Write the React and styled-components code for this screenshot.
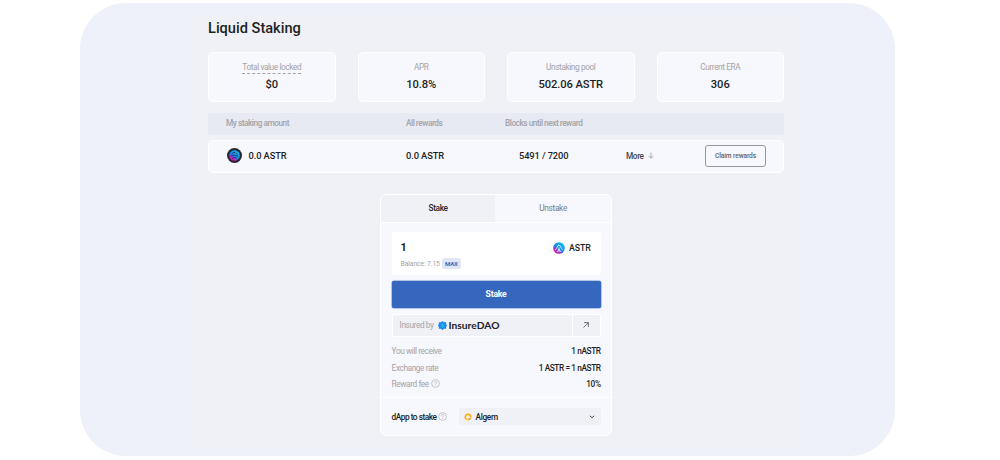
import React from "react";
import styled, { createGlobalStyle } from "styled-components";

const GlobalStyle = createGlobalStyle`
  * { box-sizing: border-box; }
  body { margin: 0; background: #fff; font-family: Roboto, "Liberation Sans", sans-serif; color: #1d1f24; }
  button { font-family: inherit; letter-spacing: inherit; margin: 0; padding: 0; border: 0; background: none; color: inherit; }
`;

const Shell = styled.div`
  width: 815px;
  height: 453px;
  margin: 3px 0 4px 80px;
  padding: 13px 95px 10px 115px;
  border-radius: 46px;
  background: #eef1fa;
  overflow: hidden;
`;

const Page = styled.main`
  height: 430px;
  padding: 0 16px 0 13px;
  background: #f0f1f6;
  box-shadow: 0 0 4px #f0f1f6;
`;

const Title = styled.h1`
  margin: 0;
  height: 36px;
  line-height: 25px;
  font-size: 14.6px;
  font-weight: 500;
  letter-spacing: 0;
`;

const Stats = styled.section`
  display: grid;
  grid-template-columns: repeat(4, 1fr);
  column-gap: 22px;
`;

const StatCard = styled.div`
  height: 50px;
  display: flex;
  flex-direction: column;
  align-items: center;
  padding-top: 8px;
  border: 1px solid #fff;
  border-radius: 5px;
  background: #f7f8fd;
`;

const StatLabel = styled.span`
  height: 13px;
  line-height: 12px;
  font-size: 8.3px;
  letter-spacing: -0.42px;
  color: #a3a3a8;
  border-bottom: 1px dashed ${(p) => (p.$hint ? "#a3a3a8" : "transparent")};
`;

const StatValue = styled.span`
  margin-top: 4px;
  line-height: 14px;
  font-size: 11.2px;
  font-weight: 500;
  letter-spacing: -0.1px;
`;

const columns = "180px 99px 121px 79px 1fr";

const TableHead = styled.div`
  display: grid;
  grid-template-columns: ${columns};
  height: 22px;
  margin-top: 11px;
  padding: 0 18px;
  line-height: 20px;
  font-size: 8.3px;
  font-weight: 500;
  letter-spacing: -0.48px;
  color: #a3a3a8;
  border-radius: 2px;
  background: #e7eaf3;
`;

const TableRow = styled.div`
  display: grid;
  grid-template-columns: ${columns};
  align-items: center;
  height: 33px;
  margin-top: 5px;
  padding: 0 17px 2px;
  border: 1px solid #fff;
  border-radius: 5px;
  background: #f7f8fd;
`;

const Cell = styled.span`
  display: flex;
  align-items: center;
  gap: ${(p) => p.$gap || 0}px;
  padding-left: ${(p) => p.$indent || 0}px;
  font-size: ${(p) => p.$size || 9.3}px;
  font-weight: 500;
  line-height: 12px;
  letter-spacing: -0.1px;
`;

const MoreButton = styled.button`
  display: flex;
  align-items: center;
  gap: 4px;
  font-size: 8.3px;
  font-weight: 500;
  letter-spacing: -0.4px;
  color: #44474f;
`;

const ClaimButton = styled.button`
  width: 61px;
  height: 22px;
  justify-self: end;
  border: 1px solid #96979e;
  border-radius: 3px;
  font-size: 6.6px;
  font-weight: 500;
  letter-spacing: -0.1px;
  color: #60636c;
`;

const StakeCard = styled.section`
  width: 232px;
  height: 242px;
  margin: 21px 0 0 171.6px;
  border: 1px solid #fff;
  border-radius: 6px;
  background: #f7f8fd;
  overflow: hidden;
`;

const Tabs = styled.div`
  display: flex;
  height: 28px;
  border-bottom: 1px solid #fff;
`;

const Tab = styled.button`
  flex: ${(p) => (p.$active ? "0 0 114px" : 1)};
  padding: 0 0 1px 1px;
  font-size: 8.3px;
  font-weight: ${(p) => (p.$active ? 500 : 400)};
  letter-spacing: ${(p) => (p.$active ? "-0.4px" : "-0.3px")};
  color: ${(p) => (p.$active ? "#26282d" : "#767b8a")};
  background: ${(p) => (p.$active ? "#f0f1f6" : "#f7f8fd")};
`;

const StakeBody = styled.div`
  height: 175px;
  padding: 9px 10px 0 11px;
  border-bottom: 1px solid #fff;
`;

const AmountBox = styled.div`
  height: 43px;
  padding: 9px 10px 0 9px;
  border-radius: 3px;
  background: #fff;
`;

const AmountLine = styled.div`
  display: flex;
  align-items: center;
  justify-content: space-between;
  height: 13px;
  font-size: 10.8px;
  font-weight: 700;
`;

const BalanceLine = styled.div`
  display: flex;
  align-items: center;
  gap: 2px;
  height: 11px;
  margin-top: 4px;
  font-size: 6.8px;
  letter-spacing: -0.12px;
  color: #a3a3a8;
`;

const MaxButton = styled.button`
  width: 19px;
  height: 11px;
  border-radius: 3px;
  font-size: 6.2px;
  font-weight: 700;
  letter-spacing: -0.3px;
  color: #4768b4;
  background: #dfe6f6;
`;

const SubmitButton = styled.button`
  display: block;
  width: 100%;
  height: 27px;
  margin-top: 6px;
  padding-bottom: 1px;
  border-radius: 2px;
  font-size: 8.6px;
  font-weight: 700;
  letter-spacing: -0.2px;
  color: #fff;
  background: #3567bf;
  box-shadow: 0 0 0 0.5px #6f93d3;
`;

const Insurance = styled.div`
  display: flex;
  height: 23px;
  margin-top: 6px;
  border: 1px solid #fff;
  border-radius: 2px;
  background: #f0f1f6;
`;

const InsuranceInfo = styled.div`
  flex: 1;
  display: flex;
  align-items: center;
  padding: 0 0 1px 7px;
  font-size: 8.3px;
  letter-spacing: -0.42px;
  color: #a3a3a8;
  svg { margin: 0 2px 0 4px; }
`;

const InsuranceBrand = styled.span`
  font-family: Lato, sans-serif;
  font-size: 10.2px;
  font-weight: 700;
  letter-spacing: 0.05px;
  color: #202127;
`;

const InsuranceLink = styled.div`
  display: grid;
  place-items: center;
  width: 28px;
  padding: 0 0 1px 0;
  border-left: 1px solid #fff;
`;

const Details = styled.dl`
  margin: 6px 0 0;
`;

const Detail = styled.div`
  display: flex;
  align-items: center;
  justify-content: space-between;
  height: 16.4px;
  font-size: 8.3px;
  letter-spacing: -0.42px;
  dt { display: flex; align-items: center; gap: 2px; color: #a3a3a8; }
  dd { margin: 0; font-weight: 500; }
`;

const DappLine = styled.div`
  display: flex;
  align-items: center;
  gap: 2px;
  height: 37px;
  padding: 0 10px 0 11px;
  font-size: 8.3px;
  font-weight: 500;
  letter-spacing: -0.48px;
`;

const DappSelect = styled.div`
  display: flex;
  align-items: center;
  gap: 4px;
  width: 142px;
  height: 17px;
  margin-left: auto;
  padding: 0 6px 0 5px;
  border-radius: 2px;
  background: #f0f1f6;
  letter-spacing: -0.35px;
  svg:last-child { margin-left: auto; }
`;

const AstarIcon = ({ size, dark, id }) => (
  <svg width={size} height={size} viewBox="0 0 16 16" fill="none">
    <defs>
      <linearGradient id={id} x1="3" y1="14" x2="12" y2="2" gradientUnits="userSpaceOnUse">
        <stop stopColor="#e6109a" />
        <stop offset=".25" stopColor="#9a38d0" />
        <stop offset=".45" stopColor="#1689e8" />
        <stop offset="1" stopColor="#12b9f4" />
      </linearGradient>
    </defs>
    {dark && <circle cx="8" cy="8" r="8" fill="#28262f" />}
    <g transform={dark ? "translate(2.2 2.2) scale(.725)" : undefined}>
      <circle cx="8" cy="8" r="7.8" fill={`url(#${id})`} />
      <path
        d={
          dark
            ? "M3 8.500c2 1 3-1 5-1s2.500 2 5 1M5 12c1.500-1.500 4.500-1.500 6 0M4.500 5c1-1.300 2-1.800 3.500-1.500M10.500 4.200l1.500 1.500"
            : "M3.500 10c2.500-.5 1.500-5.500 4.500-5.700 3-.2 2 5.200 4.500 5.700M8 7.800v5M5.800 12.600 8 9.500l2.200 3.100"
        }
        stroke={dark ? "#251f50" : "#d9edff"}
        strokeWidth="1.300"
        strokeLinecap="round"
      />
    </g>
  </svg>
);

const ArrowDown = () => (
  <svg width="6" height="7" viewBox="0 0 6 7" fill="none" stroke="#9699a1" strokeWidth=".8">
    <path d="M3 .5v5.700M.6 3.900 3 6.300l2.400-2.400" />
  </svg>
);

const ArrowOut = () => (
  <svg width="6" height="6" viewBox="0 0 6 6" fill="none" stroke="#62656d" strokeWidth=".9">
    <path d="M.5 5.500 5.300.7M1 .6h4.400V5" />
  </svg>
);

const InsureIcon = () => (
  <svg width="9" height="9" viewBox="0 0 18 18">
    <path
      d="M9 0l3.100 2.700 4.100-.2.2 4.200L18 9l-1.600 2.400-.2 4.100-4.100-.2L9 18l-3.100-2.700-4.100.2-.2-4.100L0 9l1.600-2.300.2-4.200 4.100.2z"
      fill="#1787f2"
    />
    <path d="M9 4v10M4.800 6.600l8.400 4.800M4.800 11.400l8.400-4.800" stroke="#28b4ee" strokeWidth="2" />
  </svg>
);

const HelpIcon = () => (
  <svg width="9" height="9" viewBox="0 0 18 18" fill="none" stroke="#a9aab0" strokeWidth="1.300">
    <circle cx="9" cy="9" r="7.800" />
    <path d="M6.600 7.200c0-3.200 4.900-3 4.900 0 0 1.700-2.500 1.800-2.500 3.600M9 12.200v1.500" />
  </svg>
);

const AlgemIcon = () => (
  <svg width="8" height="8" viewBox="0 0 16 16" fill="none">
    <path d="M13.400 8.500A5.400 5.400 0 1 0 6 13" stroke="#ffb01f" strokeWidth="3.600" />
    <path d="M6 15c4 .4 8-1.500 9-5.500h-4L8.500 12z" fill="#f6a11b" />
  </svg>
);

const Chevron = () => (
  <svg width="6" height="4" viewBox="0 0 6 4" fill="none" stroke="#303239" strokeWidth="1">
    <path d="M1 .8 3 2.800 5 .8" />
  </svg>
);

const stats = [
  { label: "Total value locked", value: "$0", hint: true },
  { label: "APR", value: "10.8%" },
  { label: "Unstaking pool", value: "502.06 ASTR" },
  { label: "Current ERA", value: "306" },
];

const details = [
  { label: "You will receive", value: "1 nASTR" },
  { label: "Exchange rate", value: "1 ASTR = 1 nASTR" },
  { label: "Reward fee", value: "10%", help: true },
];

export default function App() {
  return (
    <>
      <GlobalStyle />
      <Shell>
        <Page>
          <Title>Liquid Staking</Title>
          <Stats>
            {stats.map((s) => (
              <StatCard key={s.label}>
                <StatLabel $hint={s.hint}>{s.label}</StatLabel>
                <StatValue>{s.value}</StatValue>
              </StatCard>
            ))}
          </Stats>
          <TableHead>
            <span>My staking amount</span>
            <span>All rewards</span>
            <span>Blocks until next reward</span>
          </TableHead>
          <TableRow>
            <Cell $gap={7} $indent={0.5}>
              <AstarIcon size={15} dark id="astar-row" />
              0.0 ASTR
            </Cell>
            <Cell>0.0 ASTR</Cell>
            <Cell $indent={14}>5491 / 7200</Cell>
            <MoreButton>
              More <ArrowDown />
            </MoreButton>
            <ClaimButton>Claim rewards</ClaimButton>
          </TableRow>
          <StakeCard>
            <Tabs>
              <Tab $active>Stake</Tab>
              <Tab>Unstake</Tab>
            </Tabs>
            <StakeBody>
              <AmountBox>
                <AmountLine>
                  1
                  <Cell $gap={4} $size={8.8}>
                    <AstarIcon size={12} id="astar-input" />
                    ASTR
                  </Cell>
                </AmountLine>
                <BalanceLine>
                  Balance: 7.15 <MaxButton>MAX</MaxButton>
                </BalanceLine>
              </AmountBox>
              <SubmitButton>Stake</SubmitButton>
              <Insurance>
                <InsuranceInfo>
                  Insured by
                  <InsureIcon />
                  <InsuranceBrand>InsureDAO</InsuranceBrand>
                </InsuranceInfo>
                <InsuranceLink>
                  <ArrowOut />
                </InsuranceLink>
              </Insurance>
              <Details>
                {details.map((d) => (
                  <Detail key={d.label}>
                    <dt>
                      {d.label}
                      {d.help && <HelpIcon />}
                    </dt>
                    <dd>{d.value}</dd>
                  </Detail>
                ))}
              </Details>
            </StakeBody>
            <DappLine>
              dApp to stake <HelpIcon />
              <DappSelect>
                <AlgemIcon />
                Algem
                <Chevron />
              </DappSelect>
            </DappLine>
          </StakeCard>
        </Page>
      </Shell>
    </>
  );
}
